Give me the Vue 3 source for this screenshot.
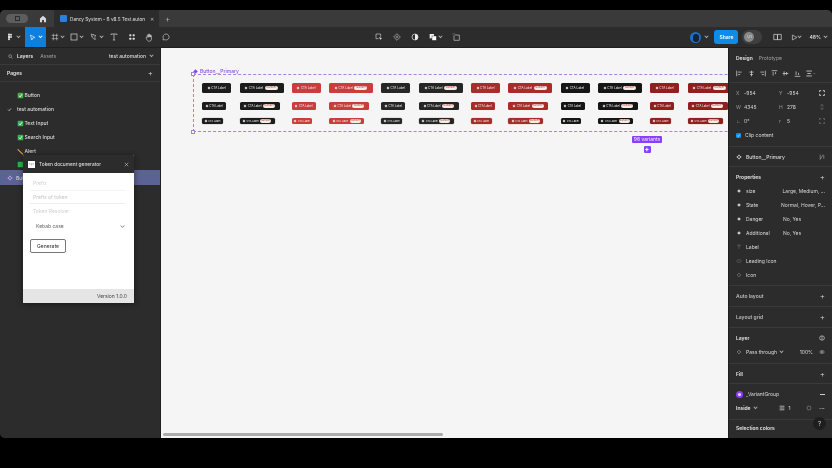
<script setup>
const tones = ['ink', 'red', 'ink2', 'red2', 'ink3', 'red3']
const sizes = ['lg', 'md', 'sm']
const variants = []
for (const size of sizes) {
  for (const tone of tones) {
    variants.push({ size, tone, pill: false })
    variants.push({ size, tone, pill: true })
  }
}
const pages = [
  { name: 'Button', mark: 'check' },
  { name: 'test automation', mark: 'tick' },
  { name: 'Text Input', mark: 'check' },
  { name: 'Search Input', mark: 'check' },
  { name: 'Alert', mark: 'pencil' },
]
const props = [
  { name: 'size', value: 'Large, Medium, ...', icon: 'dia' },
  { name: 'State', value: 'Normal, Hover, P...', icon: 'dia' },
  { name: 'Danger', value: 'No, Yes', icon: 'dia' },
  { name: 'Additional', value: 'No, Yes', icon: 'dia' },
  { name: 'Label', value: '', icon: 'text' },
  { name: 'Leading Icon', value: '', icon: 'eye' },
  { name: 'Icon', value: '', icon: 'out' },
]
</script>

<template>
  <div class="page">
    <div class="app">
      <header class="tabbar">
        <div class="pill-btn"><span class="pill-mark"></span></div>
        <svg class="home" viewBox="0 0 10 10"><path d="M5 1 1.2 4.4V9h2.6V6.2h2.4V9h2.6V4.4z" fill="#d8d8d8"/></svg>
        <div class="tab">
          <span class="tab-icon"></span>
          <span class="tab-title">Dancy System - B v8.5 Test auton</span>
          <span class="tab-x">✕</span>
        </div>
        <span class="tab-plus">+</span>
      </header>

      <div class="toolbar">
        <div class="tools">
          <svg class="tool t-menu" viewBox="0 0 10 12"><g fill="#ddd"><rect x="2" y="1" width="3" height="3"/><rect x="5" y="1" width="3" height="3" rx="1.4"/><rect x="2" y="4.5" width="3" height="3"/><circle cx="6.5" cy="6" r="1.5"/><path d="M2 8h3v1.5a1.5 1.5 0 0 1-3 0z"/></g></svg>
          <span class="caret c-menu"></span>
          <div class="move">
            <svg viewBox="0 0 10 10" class="move-icon"><path d="M2 1.5 8.5 5 5.4 5.8 4 8.6z" fill="none" stroke="#fff" stroke-width=".9"/></svg>
            <span class="caret light"></span>
          </div>
          <div class="tool-g w-frame">
            <svg class="tool" viewBox="0 0 12 12"><path d="M1 3.5h10M1 8.5h10M3.5 1v10M8.5 1v10" stroke="#ccc" stroke-width=".9" fill="none"/></svg><span class="caret"></span>
          </div>
          <div class="tool-g w-rect">
            <svg class="tool" viewBox="0 0 12 12"><rect x="1.5" y="1.5" width="9" height="9" stroke="#ddd" stroke-width="1" fill="none"/></svg><span class="caret"></span>
          </div>
          <div class="tool-g w-pen">
            <svg class="tool" viewBox="0 0 12 12"><path d="M1.5 1.5 9 4 7 5.5 8 10 4.5 8 1.5 1.5zM1.5 5h2M5 1.5v2" stroke="#ccc" stroke-width=".9" fill="none"/></svg><span class="caret"></span>
          </div>
          <svg class="tool w-t" viewBox="0 0 12 12"><path d="M1.5 3V1.5h9V3M6 1.5v9M4.3 10.5h3.4" stroke="#ddd" stroke-width="1" fill="none"/></svg>
          <svg class="tool w-c" viewBox="0 0 12 12"><g fill="#ddd"><rect x="2" y="2" width="3" height="3" rx=".8"/><rect x="7" y="2" width="3" height="3" rx=".8"/><rect x="2" y="7" width="3" height="3" rx=".8"/><rect x="7" y="7" width="3" height="3" rx=".8"/></g></svg>
          <svg class="tool w-h" viewBox="0 0 12 12"><path d="M3 6V3.2a.7.7 0 0 1 1.4 0V6m0-.6V2a.7.7 0 0 1 1.4 0v3.4m0 0V2.6a.7.7 0 0 1 1.4 0v3m0 0V3.6a.7.7 0 0 1 1.4 0V8c0 2-1.2 3-3 3-1.5 0-2.200-.8-3-2L1.500 6.800c-.5-.8.6-1.500 1.200-.8L3 6.500" stroke="#e0e0e0" stroke-width=".8" fill="none"/></svg>
          <svg class="tool w-b" viewBox="0 0 12 12"><path d="M6 1.500a4.500 4.500 0 1 1-2 8.500L1.500 10.500 2 8A4.500 4.500 0 0 1 6 1.500z" stroke="#ddd" stroke-width=".9" fill="none"/></svg>
        </div>

        <div class="mid-tools">
          <svg class="mt" viewBox="0 0 12 12"><path d="M1.500 1.500h7v4M1.500 1.500v7h4" stroke="#ccc" stroke-width="1" fill="none"/><path d="M6 6l5 1.800-2 .8-.8 2z" fill="#ddd"/></svg>
          <svg class="mt" viewBox="0 0 12 12"><path d="M6 1 11 6 6 11 1 6z" stroke="#ccc" stroke-width=".9" fill="none"/><circle cx="6" cy="6" r="1.400" stroke="#ccc" stroke-width=".8" fill="none"/></svg>
          <svg class="mt" viewBox="0 0 12 12"><circle cx="6" cy="6" r="4.500" stroke="#eee" stroke-width="1" fill="none"/><path d="M6 1.500a4.500 4.500 0 0 1 0 9z" fill="#eee"/></svg>
          <div class="mt-g">
            <svg class="mt" viewBox="0 0 12 12"><rect x="1" y="1.500" width="6.500" height="6.500" fill="#eee"/><rect x="4.500" y="4.500" width="6.500" height="6.500" fill="#fff" stroke="#2c2c2c" stroke-width=".6"/></svg>
            <span class="caret"></span>
          </div>
          <svg class="mt" viewBox="0 0 12 12"><path d="M4 3h7v8H3V4" stroke="#ccc" stroke-width="1" fill="none"/><path d="M1 1h1M3.500 1h1M1 3h1" stroke="#ccc" stroke-width=".8"/></svg>
        </div>

        <div class="top-right">
          <span class="avatar"><span class="avatar-head"></span></span>
          <span class="caret"></span>
          <span class="share">Share</span>
          <span class="toggle"><span class="knob">U/I</span></span>
          <svg class="book" viewBox="0 0 12 10"><path d="M1 1.500h4.500c.4 0 .5.300.5.500v6.500H1zM11 1.500H6.500c-.4 0-.5.300-.5.500v6.500h5z" stroke="#ddd" stroke-width=".9" fill="none"/></svg>
          <svg class="play" viewBox="0 0 10 10"><path d="M2 1.500 8.500 5 2 8.500z" stroke="#ddd" stroke-width=".9" fill="none"/></svg>
          <span class="caret"></span>
          <span class="zoom">48%</span>
          <span class="caret"></span>
        </div>
      </div>

      <main class="main">
        <aside class="left">
          <div class="left-tabs">
            <svg class="search" viewBox="0 0 10 10"><circle cx="4.300" cy="4.300" r="2.800" fill="none" stroke="#ccc"/><path d="M6.500 6.500 9 9" stroke="#ccc"/></svg>
            <span class="strong">Layers</span>
            <span class="dim">Assets</span>
            <span class="left-page">test automation</span>
            <span class="caret"></span>
          </div>
          <div class="left-pages">
            <span class="strong">Pages</span>
            <span class="plus">+</span>
          </div>
          <ul class="page-list">
            <li v-for="p in pages" :key="p.name" class="page-row">
              <svg v-if="p.mark === 'check'" class="emoji" viewBox="0 0 10 10"><rect x="1" y="1" width="8" height="8" rx="1.200" fill="#35b44a"/><path d="M2.800 5.200 4.400 7 7.400 3" stroke="#fff" stroke-width="1.200" fill="none"/></svg>
              <svg v-else-if="p.mark === 'tick'" class="tick" viewBox="0 0 10 10"><path d="M2 5.200 4.200 7.400 8 2.800" stroke="#eee" stroke-width="1.300" fill="none"/></svg>
              <svg v-else class="emoji" viewBox="0 0 10 10"><path d="M1 2 8.500 9" stroke="#e0a030" stroke-width="1.600"/><path d="M1 2l1.200.2L1.200 3.200z" fill="#f08080"/></svg>
              <span>{{ p.name }}</span>
            </li>
          </ul>
          <div class="page-row hidden-row">
            <svg class="emoji" viewBox="0 0 10 10"><rect x="1" y="1" width="8" height="8" rx="1.200" fill="#35b44a"/></svg>
          </div>
          <div class="sel-row">
            <svg class="sel-icon" viewBox="0 0 10 10"><path d="M5 .8 6.600 2.400 5 4 3.400 2.400zM5 6 6.600 7.600 5 9.200 3.400 7.600zM2.400 3.400 4 5 2.400 6.600.8 5zM7.600 3.400 9.200 5 7.600 6.600 6 5z" fill="#c9a8ff"/></svg>
            <span>Button</span>
          </div>
        </aside>

        <section class="canvas">
          <div class="frame-label">
            <svg viewBox="0 0 10 10"><path d="M5 .5 9.500 5 5 9.500.5 5z" fill="#8a3ffc"/></svg>
            <span>Button__Primary</span>
          </div>
          <div class="frame">
            <span class="corner tl"></span>
            <span class="corner bl"></span>
            <div class="grid">
              <div
                v-for="(v, i) in variants"
                :key="i"
                class="cta"
                :class="[v.size, v.tone, { wide: v.pill }]"
              >
                <i class="dot"></i>
                <span class="cta-text">CTA Label</span>
                <span v-if="v.pill" class="num">Number</span>
              </div>
            </div>
          </div>
          <div class="variants">
            <span class="variants-tag">96 variants</span>
            <span class="variants-add">+</span>
          </div>
          <div class="scroll"></div>
        </section>

        <aside class="right">
          <div class="r-tabs">
            <span class="strong">Design</span>
            <span class="dim">Prototype</span>
          </div>
          <div class="aligns">
            <svg v-for="n in 6" :key="n" class="al" viewBox="0 0 10 10">
              <path v-if="n <= 3" :d="n === 1 ? 'M1 1v8M3 3h5M3 6.500h3' : n === 2 ? 'M5 1v8M2 3h6M3 6.500h4' : 'M9 1v8M2 3h5M4 6.500h3'" stroke="#ddd" fill="none"/>
              <path v-else :d="n === 4 ? 'M1 1h8M3 3v5M6.500 3v3' : n === 5 ? 'M1 5h8M3 2v6M6.500 3v4' : 'M1 9h8M3 2v5M6.500 4v3'" stroke="#ddd" fill="none"/>
            </svg>
            <svg class="al last" viewBox="0 0 14 10"><path d="M1 1.500h8M1 8.500h8M2.500 5h5" stroke="#ddd" stroke-width="1.100"/><path d="M11 4.500l1.300 1.300 1.300-1.300" stroke="#bbb" stroke-width=".6" fill="none"/></svg>
          </div>
          <div class="geo">
            <div class="geo-row"><span class="k">X</span><span class="v">-954</span><span class="k">Y</span><span class="v">-954</span>
              <svg class="gi" viewBox="0 0 10 10"><path d="M1 3.500V1h2.500M6.500 1H9v2.500M9 6.500V9H6.500M3.500 9H1V6.500" stroke="#eee" stroke-width="1.300" fill="none"/></svg></div>
            <div class="geo-row"><span class="k">W</span><span class="v">4345</span><span class="k">H</span><span class="v">278</span>
              <svg class="gi" viewBox="0 0 10 10"><path d="M3.500 4V2.500a1.500 1.500 0 0 1 3 0V4M3.500 6v1.500a1.500 1.500 0 0 0 3 0V6" stroke="#888" fill="none"/></svg></div>
            <div class="geo-row"><span class="k">∟</span><span class="v">0°</span><span class="k">r</span><span class="v">5</span>
              <svg class="gi" viewBox="0 0 10 10"><path d="M1 3V1h2M7 1h2v2M9 7v2H7M3 9H1V7" stroke="#999" fill="none"/></svg></div>
            <div class="clip"><span class="box"><svg viewBox="0 0 10 10"><path d="M2.500 5.200 4.300 7 7.500 3" stroke="#fff" stroke-width="1.300" fill="none"/></svg></span><span>Clip content</span></div>
          </div>
          <div class="comp">
            <svg class="mini" viewBox="0 0 10 10"><path d="M5 .8 6.600 2.400 5 4 3.400 2.400zM5 6 6.600 7.600 5 9.200 3.400 7.600zM2.400 3.400 4 5 2.400 6.600.8 5zM7.600 3.400 9.200 5 7.600 6.600 6 5z" fill="#e0e0e0"/></svg>
            <span class="comp-name">Button__Primary</span>
            <svg class="mini end" viewBox="0 0 10 10"><path d="M2 1v8M2 9l5-8M8 2v6" stroke="#aaa" fill="none"/></svg>
          </div>
          <div class="props">
            <div class="sec-head"><span class="strong">Properties</span><span class="plus">+</span></div>
            <div v-for="p in props" :key="p.name" class="prop">
              <svg class="mini" viewBox="0 0 10 10">
                <path v-if="p.icon === 'dia'" d="M5 2 8 5 5 8 2 5z" fill="#ccc"/>
                <path v-else-if="p.icon === 'text'" d="M2 2h6M5 2v6" stroke="#777" stroke-width="1" fill="none"/>
                <path v-else-if="p.icon === 'eye'" d="M1 5c2-3 6-3 8 0-2 3-6 3-8 0z" stroke="#777" stroke-width=".9" fill="none"/>
                <path v-else d="M5 2 8 5 5 8 2 5z" stroke="#999" stroke-width=".9" fill="none"/>
              </svg>
              <span class="prop-name">{{ p.name }}</span>
              <span class="prop-val">{{ p.value }}</span>
            </div>
          </div>
          <div class="sec-line"><span class="strong faint">Auto layout</span><span class="plus">+</span></div>
          <div class="sec-line"><span class="strong faint">Layout grid</span><span class="plus">+</span></div>
          <div class="layer">
            <div class="sec-head"><span class="strong">Layer</span>
              <svg class="mini" viewBox="0 0 10 10"><rect x="1" y="1.500" width="8" height="7" rx="3.500" stroke="#ddd" fill="none"/><path d="M5 1.500v7" stroke="#ddd"/></svg></div>
            <div class="pass">
              <svg class="mini" viewBox="0 0 10 10"><path d="M5 2 8 5 5 8 2 5z" stroke="#aaa" fill="none"/></svg>
              <span class="pass-name">Pass through</span><span class="caret"></span>
              <span class="pct">100%</span>
              <svg class="mini" viewBox="0 0 10 10"><path d="M1 5c2-3 6-3 8 0-2 3-6 3-8 0z" stroke="#ccc" fill="none"/><circle cx="5" cy="5" r="1.200" fill="#ccc"/></svg>
            </div>
          </div>
          <div class="sec-line fill"><span class="strong">Fill</span><span class="plus">+</span></div>
          <div class="vgroup">
            <div class="vg-row">
              <span class="swatch"><i></i></span>
              <span class="vg-name">_VariantGroup</span>
              <span class="minus"></span>
            </div>
            <div class="vg-row second">
              <span class="strong">Inside</span><span class="caret"></span>
              <svg class="stroke-i" viewBox="0 0 10 10"><path d="M1 2h8M1 5h8M1 8h8" stroke="#ddd" stroke-width="1.200"/></svg>
              <span class="one">1</span>
              <svg class="mini ring" viewBox="0 0 10 10"><rect x="2" y="2" width="6" height="6" rx="2" stroke="#999" fill="none"/></svg>
              <span class="dots">•••</span>
            </div>
          </div>
          <div class="sel-colors"><span class="strong">Selection colors</span></div>
          <span class="help">?</span>
        </aside>

        <div class="plugin">
          <div class="plug-head">
            <span class="plug-logo">&lt;/&gt;</span>
            <span class="plug-title">Token document generator</span>
            <svg class="plug-x" viewBox="0 0 10 10"><path d="M1.500 1.500l7 7M8.500 1.500l-7 7" stroke="#e5e5e5" stroke-width="1"/></svg>
          </div>
          <div class="plug-body">
            <label class="lbl">Prefix</label>
            <div class="input">Prefix of token</div>
            <label class="lbl">Token Resolver</label>
            <div class="select"><span>Kebab case</span>
              <svg viewBox="0 0 10 10"><path d="M1.500 3 5 6.800 8.500 3" stroke="#444" stroke-width="1.300" fill="none"/></svg></div>
            <button class="gen">Generate</button>
          </div>
          <div class="plug-foot">Version 1.0.0</div>
        </div>
      </main>
    </div>
  </div>
</template>

<style>
html, body { margin: 0; background: #000; }
</style>

<style scoped>
* { box-sizing: border-box; }
.page {
  width: 832px; height: 468px; padding-top: 10px; background: #000; overflow: hidden;
  font-family: Inter, "Liberation Sans", sans-serif; color: #dcdcdc; font-size: 5px;
  filter: blur(.45px);
}
.app { width: 832px; height: 428px; border-radius: 5px 5px 0 5px; overflow: hidden; display: flex; flex-direction: column; background: #2c2c2c; }

.tabbar { height: 17px; background: #3a3a3a; display: flex; align-items: center; flex: none; }
.pill-btn { margin-left: 6px; width: 22px; height: 9px; border-radius: 5px; background: #5d5d5d; display: flex; align-items: center; justify-content: center; }
.pill-mark { width: 5px; height: 5px; border: 1px solid #2c2c2c; }
.home { width: 8px; height: 8px; margin-left: 11px; }
.tab { margin-left: 7px; width: 105px; height: 17px; background: #2c2c2c; display: flex; align-items: center; padding-left: 6px; }
.tab-icon { width: 7px; height: 7px; border-radius: 1px; background: #2f7fd8; flex: none; }
.tab-title { margin-left: 3px; font-size: 4.700px; white-space: nowrap; width: 78px; color: #e0e0e0; }
.tab-x { margin-left: 2px; font-size: 5px; color: #bbb; }
.tab-plus { margin-left: 6px; color: #aaa; font-size: 8px; }

.toolbar { height: 21px; background: #2c2c2c; display: flex; align-items: center; flex: none; border-bottom: 1px solid #1f1f1f; }
.tools { display: flex; align-items: center; width: 362px; height: 100%; padding-left: 6px; }
.tool { width: 8px; height: 8px; flex: none; }
.caret { display: inline-block; width: 3px; height: 3px; border-right: .6px solid #aaa; border-bottom: .6px solid #aaa; transform: rotate(45deg) translate(-1px, -1px); flex: none; }
.caret.light { border-color: #fff; margin-left: 3px; }
.c-menu { margin-left: 3px; }
.move { width: 21px; height: 20px; margin-left: 5px; background: #0d7fdc; display: flex; align-items: center; justify-content: center; flex: none; }
.move-icon { width: 7px; height: 7px; }
.tool-g { display: flex; align-items: center; gap: 2px; flex: none; }
.w-frame { margin-left: 5px; }
.w-rect { margin-left: 6px; }
.w-pen { margin-left: 7px; }
.w-t { margin-left: 7px; }
.w-c { margin-left: 10px; }
.w-h { margin-left: 9px; width: 9px; height: 9px; }
.w-b { margin-left: 8px; }
.mid-tools { display: flex; align-items: center; gap: 10px; margin-left: 13px; }
.mt { width: 8px; height: 8px; flex: none; }
.mt-g { display: flex; align-items: center; gap: 2px; }
.top-right { margin-left: auto; display: flex; align-items: center; height: 100%; padding-right: 5px; }
.avatar { width: 11px; height: 11px; border-radius: 50%; background: #1f6fc0; position: relative; overflow: hidden; flex: none; }
.avatar-head { position: absolute; left: 2.500px; top: 2px; width: 6px; height: 8px; border-radius: 3px; background: #10233a; }
.top-right > .caret:nth-child(2) { margin-left: 4px; }
.share { margin-left: 6px; width: 24px; height: 14px; border-radius: 3px; background: #0d8ce9; display: flex; align-items: center; justify-content: center; font-size: 5px; color: #fff; font-weight: 600; flex: none; }
.toggle { margin-left: 4px; width: 20px; height: 14px; border-radius: 7px; background: #3f3f3f; padding: 2px; flex: none; }
.knob { display: flex; width: 10px; height: 10px; border-radius: 50%; background: #888; font-size: 3.500px; color: #ddd; align-items: center; justify-content: center; }
.book { width: 9px; height: 8px; margin-left: 11px; }
.play { width: 7px; height: 7px; margin-left: 9px; }
.top-right > .caret:nth-of-type(3) { margin-left: 3px; }
.zoom { margin-left: 8px; font-weight: 600; font-size: 5px; }
.top-right > .caret:last-child { margin-left: 3px; }

.main { flex: 1; display: flex; position: relative; min-height: 0; }
.left { width: 161px; flex: none; background: #2c2c2c; border-right: 1px solid #1f1f1f; }
.left-tabs { height: 17px; display: flex; align-items: center; padding: 0 7px 0 8px; border-bottom: 1px solid #3a3a3a; }
.search { width: 5px; height: 5px; }
.strong { font-weight: 600; font-size: 5px; color: #e6e6e6; }
.dim { color: #a0a0a0; font-size: 5px; }
.left-tabs .strong { margin-left: 4px; }
.left-tabs .dim { margin-left: 7px; }
.left-page { margin-left: auto; font-size: 5px; font-weight: 500; margin-right: 4px; }
.left-pages { height: 17px; display: flex; justify-content: space-between; align-items: center; padding: 0 7px; border-bottom: 1px solid #3a3a3a; }
.plus { color: #ddd; font-size: 8px; line-height: 8px; font-weight: 300; }
.page-list { list-style: none; margin: 0; padding: 6px 0 0; }
.page-row { height: 14px; display: flex; align-items: center; padding-left: 17px; font-size: 5px; font-weight: 500; position: relative; }
.emoji { width: 7px; height: 7px; flex: none; margin-right: .5px; }
.tick { position: absolute; left: 7px; top: 5px; width: 5px; height: 5px; }
.hidden-row { height: 12px; }
.sel-row { height: 15px; background: #5b6394; display: flex; align-items: center; padding-left: 7px; gap: 3px; font-size: 5px; width: 160px; }
.sel-icon { width: 6px; height: 6px; flex: none; }

.canvas { flex: 1; background: #f5f5f5; position: relative; overflow: hidden; }
.frame-label { position: absolute; left: 32px; top: 20px; display: flex; align-items: center; gap: 2px; color: #8a4fe0; font-size: 5px; line-height: 6px; font-weight: 500; }
.frame-label svg { width: 5px; height: 5px; }
.frame { position: absolute; left: 32px; top: 26px; width: 700px; height: 58px; border: 1px dashed #a97fe0; }
.corner { position: absolute; left: -3px; width: 4px; height: 4px; background: #fff; border: 1px solid #a97fe0; }
.corner.tl { top: -3px; }
.corner.bl { bottom: -3px; }
.grid { display: grid; grid-template-columns: repeat(6, 29px 44px); grid-template-rows: 10px 8px 6px; column-gap: 8.300px; row-gap: 8.500px; padding: 8px 0 0 8.300px; width: 560px; }
.cta { display: flex; align-items: center; justify-content: center; gap: 1.500px; color: #eee; white-space: nowrap; justify-self: start; align-self: start; border-radius: 1.500px; }
.cta.lg { width: 29px; height: 10px; font-size: 3px; }
.cta.lg.wide { width: 44px; }
.cta.md { width: 24px; height: 8px; font-size: 2.800px; }
.cta.md.wide { width: 40px; }
.cta.sm { width: 20.500px; height: 6px; font-size: 2.500px; }
.cta.sm.wide { width: 35px; }
.dot { width: 2px; height: 2px; background: #ddd; transform: rotate(45deg); flex: none; }
.num { background: #f4ece8; color: #b3402f; border-radius: 2px; width: 13px; text-align: center; font-size: 2.500px; line-height: 4px; flex: none; }
.md .num { width: 12px; }
.sm .num { width: 11px; }
.ink { background: #1c1c1c; }
.red { background: #cb3d3a; }
.ink2 { background: #262626; }
.red2 { background: #a82c2a; }
.ink3 { background: #151515; }
.red3 { background: #931e1e; }
.sm.red2, .sm.red3 { box-shadow: 0 0 0 .5px rgba(240, 180, 170, .6); }
.sm.ink, .sm.ink2 { box-shadow: 0 0 0 .5px rgba(170, 170, 170, .5); }
.variants { position: absolute; left: 471px; top: 88px; display: flex; flex-direction: column; align-items: center; gap: 3px; }
.variants-tag { background: #8a3ffc; color: #f0e8ff; font-size: 5px; line-height: 7px; border-radius: 1px; white-space: nowrap; width: 30px; text-align: center; }
.variants-add { width: 7px; height: 7px; background: #8a3ffc; color: #fff; border-radius: 1px; font-size: 7px; line-height: 7px; text-align: center; font-weight: 700; }
.scroll { position: absolute; left: 2px; bottom: 2px; width: 280px; height: 3px; border-radius: 2px; background: #ababab; }

.right { width: 104px; flex: none; background: #2c2c2c; border-left: 1px solid #1f1f1f; position: relative; overflow: hidden; }
.r-tabs { height: 17px; display: flex; align-items: center; gap: 6px; padding: 2px 0 0 7px; }
.aligns { height: 18px; display: flex; align-items: center; padding-left: 7px; gap: 4.600px; border-bottom: 1px solid #3a3a3a; }
.al { width: 7px; height: 7px; flex: none; }
.al.last { width: 11px; margin-left: -1px; }
.geo { height: 64px; padding: 3px 7px 0; border-bottom: 1px solid #3a3a3a; }
.geo-row { height: 14px; display: flex; align-items: center; font-size: 5px; }
.k { width: 8px; color: #999; }
.v { width: 35px; color: #d4d4d4; }
.v:nth-child(4) { width: 28px; }
.gi { width: 6px; height: 6px; margin-left: auto; }
.clip { height: 14px; display: flex; align-items: center; gap: 4px; font-size: 5px; }
.box { width: 5px; height: 5px; background: #0d8ce9; border-radius: 1px; display: block; }
.box svg { width: 5px; height: 5px; display: block; }
.comp { height: 20px; display: flex; align-items: center; padding: 0 7px; border-bottom: 1px solid #3a3a3a; gap: 4px; }
.mini { width: 6px; height: 6px; flex: none; }
.end { margin-left: auto; }
.comp-name { font-size: 5px; font-weight: 500; }
.props { height: 119px; border-bottom: 1px solid #3a3a3a; padding: 3px 7px 0; }
.sec-head { height: 14px; display: flex; align-items: center; justify-content: space-between; }
.prop { height: 14px; display: flex; align-items: center; font-size: 5px; }
.prop-name { margin-left: 4px; width: 37px; }
.prop-val { color: #d4d4d4; white-space: nowrap; }
.sec-line { height: 21px; display: flex; align-items: center; justify-content: space-between; padding: 0 7px; border-bottom: 1px solid #3a3a3a; }
.faint { color: #bbb; }
.layer { height: 36px; padding: 3px 7px 0; border-bottom: 1px solid #3a3a3a; }
.pass { height: 14px; display: flex; align-items: center; font-size: 5px; }
.pass-name { margin-left: 4px; margin-right: 3px; }
.pct { margin-left: auto; margin-right: 6px; }
.fill { height: 20px; }
.vgroup { padding: 3px 7px 0; height: 37px; }
.vg-row { height: 14px; display: flex; align-items: center; font-size: 5px; }
.swatch { width: 7px; height: 7px; border-radius: 50%; background: #8a3ffc; display: flex; align-items: center; justify-content: center; flex: none; }
.swatch i { width: 3px; height: 3px; background: #e6d8ff; border-radius: 50%; }
.vg-name { margin-left: 3px; }
.minus { width: 5px; height: 1px; background: #ccc; margin-left: auto; }
.second { font-size: 5px; }
.second .caret { margin-left: 3px; }
.stroke-i { width: 6px; height: 6px; margin-left: 22px; }
.one { margin-left: 4px; }
.ring { margin-left: 15px; }
.dots { margin-left: auto; font-size: 3px; letter-spacing: .2px; }
.sel-colors { padding-left: 7px; height: 16px; display: flex; align-items: center; margin-top: -2px; border-top: 1px solid #3a3a3a; }
.help { position: absolute; right: 6px; bottom: 8px; width: 13px; height: 13px; border-radius: 50%; background: #1e1e1e; color: #ccc; font-size: 6px; display: flex; align-items: center; justify-content: center; }

.plugin { position: absolute; left: 23px; top: 107px; width: 111px; height: 148px; display: flex; flex-direction: column; box-shadow: 0 1px 6px rgba(0,0,0,.45); border-radius: 1px; overflow: hidden; background: #fff; }
.plug-head { height: 18px; background: #2c2c2c; display: flex; align-items: center; padding: 0 5px; flex: none; }
.plug-logo { width: 7px; height: 7px; background: #fff; color: #333; font-size: 3px; line-height: 7px; text-align: center; flex: none; }
.plug-title { margin-left: 4px; font-weight: 500; font-size: 4.800px; white-space: nowrap; }
.plug-x { width: 5px; height: 5px; margin-left: auto; }
.plug-body { flex: 1; background: #fff; padding: 7px 7px 0; display: flex; flex-direction: column; align-items: flex-start; }
.lbl { font-size: 5px; color: #cfcfcf; line-height: 7px; margin-left: 3px; }
.input { width: 96px; height: 14px; margin-top: 3px; margin-bottom: 4px; padding-left: 3px; display: flex; align-items: center; font-size: 5px; color: #c4c4c4; border-top: 1px solid #f4f4f4; border-bottom: 1px solid #f0f0f0; }
.select { width: 96px; height: 14px; margin-top: 4px; display: flex; align-items: center; justify-content: space-between; padding: 0 1px 0 6px; font-size: 5px; color: #666; }
.select svg { width: 5px; height: 5px; }
.gen { margin-top: 6px; width: 36px; height: 14px; background: #fff; border: 1px solid #777; border-radius: 2px; font: 500 5px Inter, sans-serif; color: #444; padding: 0; }
.plug-foot { height: 14px; background: #e5e5e5; flex: none; color: #444; font-size: 5px; display: flex; align-items: center; justify-content: flex-end; padding-right: 7px; }
</style>
